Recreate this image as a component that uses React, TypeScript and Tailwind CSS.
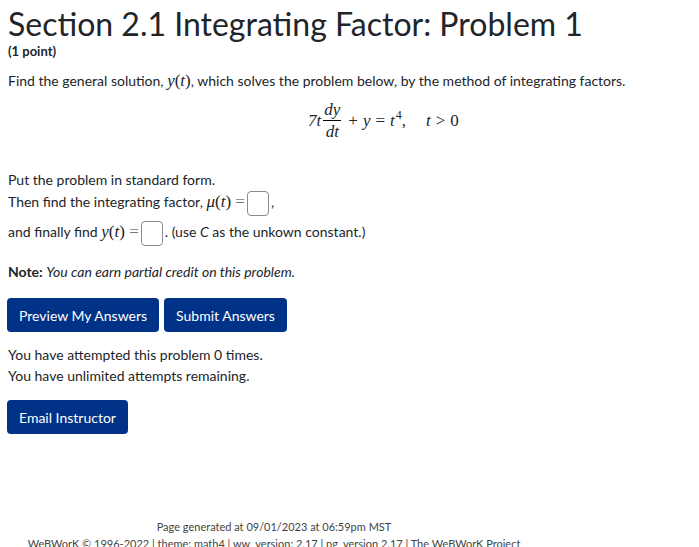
import React from "react";

function Box() {
  return (
    <span className="inline-block w-[22px] h-[25px] border border-[#8a8a8a] rounded-[4px] align-middle bg-white mx-[2px]"></span>
  );
}

export default function App() {
  return (
    <div className="bg-white text-[#212529] font-['Lato',sans-serif] w-[699px] h-[547px] overflow-hidden relative">
      <div className="px-[8px]">
        <h2 className="text-[32px] leading-[1.2] pt-[5px] font-normal">Section 2.1 Integrating Factor: Problem 1</h2>
        <div className="text-[13px] font-bold -mt-[1px]">(1 point)</div>
        <div className="text-[14px] mt-[6px]">
          Find the general solution,{" "}
          <span className="font-['Liberation_Serif',serif] text-[17px]">
            <i>y</i>(<i>t</i>)
          </span>
          , which solves the problem below, by the method of integrating factors.
        </div>
        <div className="pl-[300px] mt-[6px] flex items-center font-['Liberation_Serif',serif] text-[17px] h-[42px]">
          <i>7t</i>
          <span className="inline-flex flex-col items-center mx-[2px] leading-none">
            <span className="px-[1px] pb-[2px]"><i>dy</i></span>
            <span className="block w-full border-t border-black"></span>
            <span className="px-[1px] pt-[2px]"><i>dt</i></span>
          </span>
          <span className="mx-[5px]">+</span>
          <i>y</i>
          <span className="mx-[5px]">=</span>
          <span>
            <i>t</i>
            <span className="text-[12px] relative -top-[7px] ml-[1px]">4</span>
          </span>
          <span>,</span>
          <span className="ml-[20px]"><i>t</i></span>
          <span className="mx-[5px]">&gt;</span>
          <span>0</span>
        </div>
        <div className="text-[14px] mt-[28px] leading-[22px]">Put the problem in standard form.</div>
        <div className="text-[14px] leading-[20px]">
          Then find the integrating factor,{" "}
          <span className="font-['Liberation_Serif',serif] text-[17px]">
            <i>μ</i>(<i>t</i>) <span className="text-[#777]">=</span>
          </span>
          <Box />,
        </div>
        <div className="text-[14px] leading-[24px] mt-[4px]">
          and finally find{" "}
          <span className="font-['Liberation_Serif',serif] text-[17px]">
            <i>y</i>(<i>t</i>) <span className="text-[#777]">=</span>
          </span>
          <Box />. (use <i>C</i> as the unkown constant.)
        </div>
        <div className="text-[14px] mt-[15px]">
          <b>Note:</b> <i>You can earn partial credit on this problem.</i>
        </div>
        <div className="flex gap-[5px] mt-[16px] -ml-[1px]">
          <button className="bg-[#003388] text-white text-[14px] h-[34px] px-[12px] rounded-[4px]">Preview My Answers</button>
          <button className="bg-[#003388] text-white text-[14px] h-[34px] px-[12px] rounded-[4px]">Submit Answers</button>
        </div>
        <div className="text-[14px] mt-[12px] leading-[21px]">
          <div>You have attempted this problem 0 times.</div>
          <div>You have unlimited attempts remaining.</div>
        </div>
        <button className="bg-[#003388] text-white text-[14px] h-[34px] px-[12px] rounded-[4px] mt-[14px] -ml-[1px]">Email Instructor</button>
      </div>
      <div className="w-[548px] text-center text-[11px] text-[#444] mt-[84px] leading-[17px]">
        <div>Page generated at 09/01/2023 at 06:59pm MST</div>
        <div>WeBWorK © 1996-2022 | theme: math4 | ww_version: 2.17 | pg_version 2.17 | The WeBWorK Project</div>
      </div>
    </div>
  );
}
